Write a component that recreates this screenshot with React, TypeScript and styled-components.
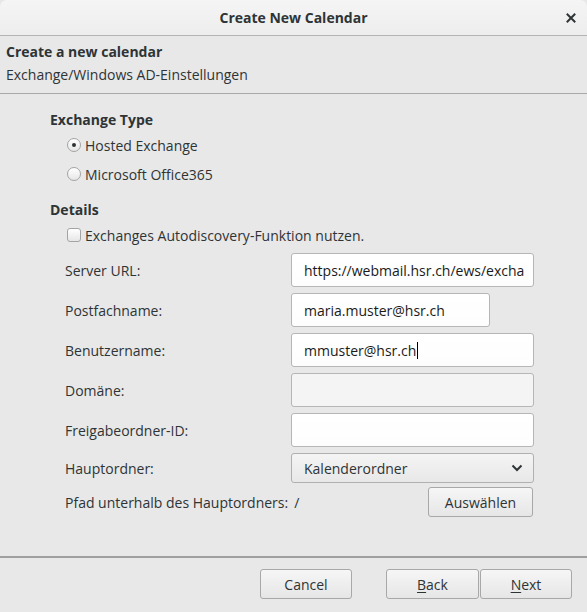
import React from "react";
import styled, { createGlobalStyle } from "styled-components";

const Global = createGlobalStyle`
  html, body { margin: 0; padding: 0; background: #e8e8e8; }
  body { font-family: "Open Sans", "DejaVu Sans", sans-serif; font-size: 14px; color: #2e3436; }
  * { box-sizing: border-box; }
`;

const Window = styled.div`
  width: 587px;
  height: 612px;
  display: flex;
  flex-direction: column;
  background: #e8e8e8;
  overflow: hidden;
`;

const TitleBar = styled.div`
  height: 36px;
  flex: none;
  display: flex;
  align-items: center;
  justify-content: center;
  position: relative;
  background: linear-gradient(#f5f5f5, #ededed);
  border-bottom: 1px solid #b4b4b4;
  border-radius: 7px 7px 0 0;
  font-weight: 700;
  font-size: 14px;
`;

const CloseBtn = styled.span`
  position: absolute;
  right: 9px;
  top: 11px;
  width: 14px;
  height: 14px;
  display: flex;
  align-items: center;
  justify-content: center;
`;

const Header = styled.div`
  flex: none;
  height: 58px;
  padding: 6px 6px 0;
  border-bottom: 1px solid #a8a8a8;
  display: flex;
  flex-direction: column;
`;

const HeaderTitle = styled.div`
  font-weight: 700;
  line-height: 20px;
  height: 23px;
`;

const HeaderSub = styled.div`
  line-height: 20px;
`;

const Content = styled.div`
  flex: 1;
  padding: 16px 0 0 50px;
  display: flex;
  flex-direction: column;
`;

const SectionTitle = styled.div<{ $top?: number }>`
  font-weight: 700;
  line-height: 20px;
  margin-top: ${(p) => p.$top ?? 0}px;
`;

const OptionRow = styled.label<{ $top?: number }>`
  display: flex;
  align-items: center;
  gap: 4px;
  margin-left: 17px;
  height: 20px;
  margin-top: ${(p) => p.$top ?? 0}px;
`;

const Radio = styled.span<{ $checked?: boolean }>`
  width: 14px;
  height: 14px;
  border-radius: 50%;
  border: 1px solid #a4a4a4;
  background: linear-gradient(#ffffff, #e6e6e6);
  display: flex;
  align-items: center;
  justify-content: center;
  &::after {
    content: "";
    width: 4px;
    height: 4px;
    border-radius: 50%;
    background: ${(p) => (p.$checked ? "#2e3436" : "transparent")};
  }
`;

const Check = styled.span`
  width: 14px;
  height: 14px;
  border-radius: 3px;
  border: 1px solid #a4a4a4;
  background: linear-gradient(#ffffff, #e6e6e6);
`;

const Form = styled.div`
  margin-top: 8px;
  margin-left: 15px;
  width: 468px;
  display: grid;
  grid-template-columns: 226px 243px;
  row-gap: 6px;
  align-items: center;
`;

const Label = styled.div``;

const Input = styled.div<{ $w?: number; $disabled?: boolean }>`
  height: 34px;
  width: ${(p) => (p.$w ? `${p.$w}px` : "100%")};
  border: 1px solid #b6b6b6;
  border-radius: 3px;
  background: ${(p) => (p.$disabled ? "#f4f4f4" : "linear-gradient(#ffffff, #fdfdfd)")};
  display: flex;
  align-items: center;
  padding-left: 12px;
  white-space: nowrap;
  overflow: hidden;
  color: #1a1a1a;
`;

const Caret = styled.span`
  display: inline-block;
  width: 1px;
  height: 17px;
  background: #000;
  margin-left: 1px;
`;

const Select = styled.div`
  height: 30px;
  border: 1px solid #b0b0b0;
  border-radius: 3px;
  background: linear-gradient(#f4f4f4, #e8e8e8);
  display: flex;
  align-items: center;
  justify-content: space-between;
  padding: 0 10px 0 12px;
`;

const PathValue = styled.span`
  margin-left: 6px;
`;

const PathRow = styled.div`
  grid-column: 1 / 3;
  display: flex;
  align-items: center;
  justify-content: space-between;
  margin-top: -2px;
  padding-right: 1px;
`;

const Button = styled.button<{ $w: number }>`
  width: ${(p) => p.$w}px;
  height: 30px;
  border: 1px solid #a8a8a8;
  border-radius: 3px;
  background: linear-gradient(#f6f6f6, #e6e6e6);
  font-family: inherit;
  font-size: 14px;
  color: #2e3436;
  padding: 0;
  display: flex;
  align-items: center;
  justify-content: center;
  u { text-decoration: underline; text-underline-offset: 2px; }
`;

const Footer = styled.div`
  flex: none;
  height: 56px;
  border-top: 2px solid #a0a0a0;
  display: flex;
  align-items: flex-start;
  padding: 11px 15px 0 0;
  justify-content: flex-end;
`;

const FooterGap = styled.div`
  width: 34px;
`;

const ButtonPair = styled.div`
  display: flex;
  gap: 1px;
`;

export default function App() {
  return (
    <>
      <Global />
      <Window>
        <TitleBar>
          Create New Calendar
          <CloseBtn>
            <svg width="10" height="10" viewBox="0 0 10 10">
              <path d="M1.5 1.5 L8.5 8.5 M8.5 1.5 L1.5 8.5" stroke="#2e3436" strokeWidth="2" strokeLinecap="square" />
            </svg>
          </CloseBtn>
        </TitleBar>
        <Header>
          <HeaderTitle>Create a new calendar</HeaderTitle>
          <HeaderSub>Exchange/Windows AD-Einstellungen</HeaderSub>
        </Header>
        <Content>
          <SectionTitle>Exchange Type</SectionTitle>
          <OptionRow $top={5}>
            <Radio $checked />
            Hosted Exchange
          </OptionRow>
          <OptionRow $top={9}>
            <Radio />
            Microsoft Office365
          </OptionRow>
          <SectionTitle $top={16}>Details</SectionTitle>
          <OptionRow $top={5}>
            <Check />
            Exchanges Autodiscovery-Funktion nutzen.
          </OptionRow>
          <Form>
            <Label>Server URL:</Label>
            <Input>https://webmail.hsr.ch/ews/excha</Input>
            <Label>Postfachname:</Label>
            <Input $w={199}>maria.muster@hsr.ch</Input>
            <Label>Benutzername:</Label>
            <Input>
              mmuster@hsr.ch<Caret />
            </Input>
            <Label>Domäne:</Label>
            <Input $disabled />
            <Label>Freigabeordner-ID:</Label>
            <Input />
            <Label>Hauptordner:</Label>
            <Select>
              Kalenderordner
              <svg width="12" height="8" viewBox="0 0 12 8">
                <path d="M1.5 1.5 L6 6 L10.5 1.5" stroke="#2e3436" strokeWidth="2" fill="none" />
              </svg>
            </Select>
            <PathRow>
              <span>
                Pfad unterhalb des Hauptordners:<PathValue>/</PathValue>
              </span>
              <Button $w={105}>Auswählen</Button>
            </PathRow>
          </Form>
        </Content>
        <Footer>
          <Button $w={92}>Cancel</Button>
          <FooterGap />
          <ButtonPair>
            <Button $w={93}>
              <u>B</u>ack
            </Button>
            <Button $w={92}>
              <u>N</u>ext
            </Button>
          </ButtonPair>
        </Footer>
      </Window>
    </>
  );
}
